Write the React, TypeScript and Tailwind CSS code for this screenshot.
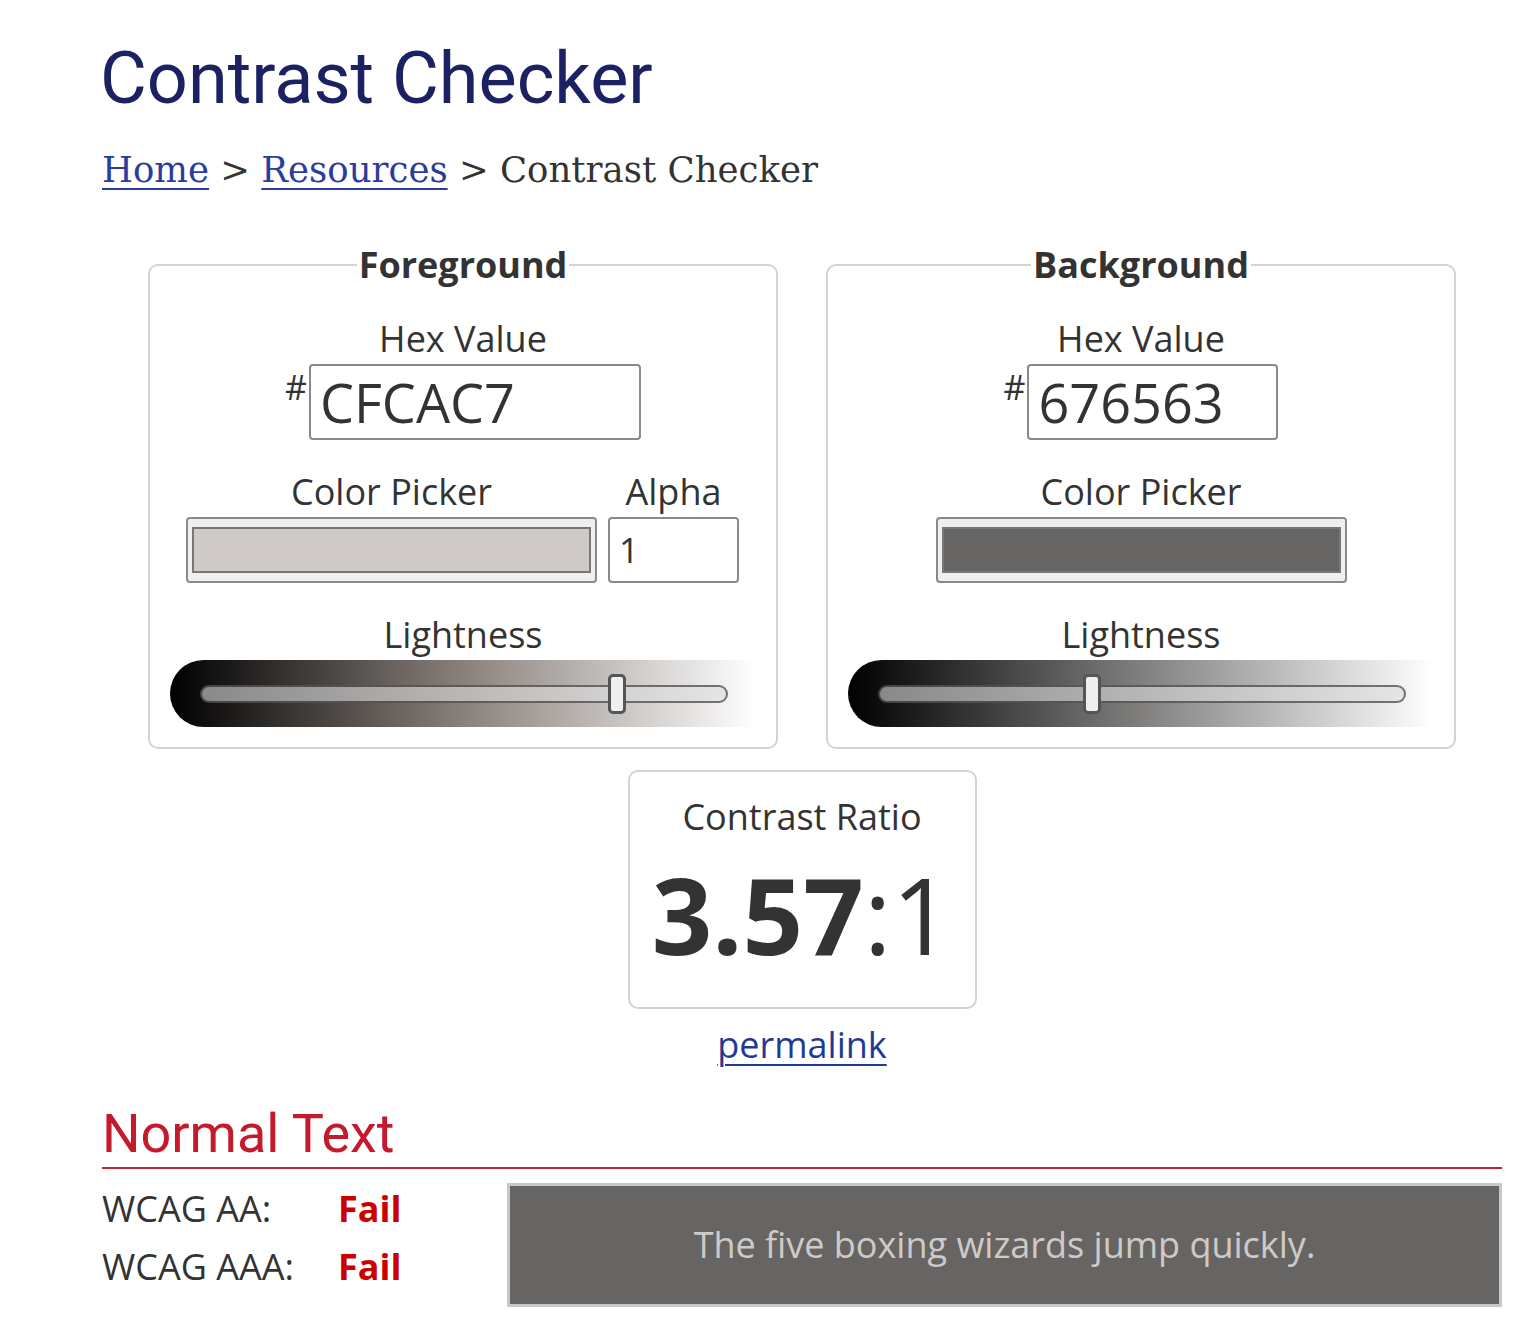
import React from "react";

const sans = "font-['Open_Sans',sans-serif]";

function Slider({ gradient, thumbLeft }: { gradient: string; thumbLeft: string }) {
  return (
    <div className={`w-[585px] h-[67px] rounded-l-full flex items-center pl-[30px] pr-[27px] ${gradient}`}>
      <div className="relative w-full h-[18px] rounded-full bg-[rgba(220,220,220,0.6)] border-2 border-black/50">
        <div className={`absolute top-[-13px] w-[18px] h-[40px] rounded-[5px] bg-[#efefef] border-[3px] border-[#555] ${thumbLeft}`} />
      </div>
    </div>
  );
}

function ColorSwatch({ color }: { color: string }) {
  return (
    <div className="w-[411px] h-[66px] rounded-[4px] border-2 border-[#8a8a8a] bg-[#efefef] px-[4px] py-[8px]">
      <div className={`w-full h-full border-2 border-[#777] ${color}`} />
    </div>
  );
}

export default function App() {
  return (
    <div className={`bg-white w-[1536px] min-h-[1338px] text-[#333] ${sans}`}>
      <div className="w-[1400px] ml-[102px] pt-[36px]">
        <h1 className="font-['Roboto',sans-serif] text-[72px] leading-[86px] text-[#1b2163] ml-[-2px]">
          Contrast Checker
        </h1>
        <div className="font-['DejaVu_Serif',serif] text-[35.5px] leading-[44px] mt-[26px] text-[#333]">
          <a className="text-[#2a3c9c] underline underline-offset-[6px] decoration-2">Home</a>
          <span> &gt; </span>
          <a className="text-[#2a3c9c] underline underline-offset-[6px] decoration-2">Resources</a>
          <span> &gt; Contrast Checker</span>
        </div>

        <div className="flex justify-center gap-[48px] mt-[53px]">
          <fieldset className="w-[630px] h-[504px] border-2 border-[#d3d3d3] rounded-[10px] flex flex-col items-center">
            <legend className="mx-auto px-[2px] text-[36px] font-bold leading-[40px]">Foreground</legend>
            <div className="text-[36px] leading-[44px] mt-[32px]">Hex Value</div>
            <div className="flex items-start mt-[3px]">
              <span className="text-[34px] leading-[34px] mt-[6px] mr-[2px]">#</span>
              <div className="w-[332px] h-[76px] rounded-[4px] border-2 border-[#8a8a8a] pl-[9px] flex items-center text-[54px] leading-none">
                CFCAC7
              </div>
            </div>
            <div className="flex items-end gap-[11px] mt-[30px] ml-[-1px]">
              <div className="flex flex-col items-center">
                <div className="text-[36px] leading-[44px] mb-[3px]">Color Picker</div>
                <ColorSwatch color="bg-[#cfcac7]" />
              </div>
              <div className="flex flex-col items-center">
                <div className="text-[36px] leading-[44px] mb-[3px]">Alpha</div>
                <div className="w-[131px] h-[66px] rounded-[4px] border-2 border-[#8a8a8a] pl-[9px] flex items-center text-[35px]">
                  1
                </div>
              </div>
            </div>
            <div className="text-[36px] leading-[44px] mt-[30px]">Lightness</div>
            <div className="mt-[3px] mr-[2px]">
              <Slider gradient="bg-[linear-gradient(to_right,#000_0%,#89807a_50%,#fff_100%)]" thumbLeft="left-[406px]" />
            </div>
          </fieldset>

          <fieldset className="w-[630px] h-[504px] border-2 border-[#d3d3d3] rounded-[10px] flex flex-col items-center">
            <legend className="mx-auto px-[2px] text-[36px] font-bold leading-[40px]">Background</legend>
            <div className="text-[36px] leading-[44px] mt-[32px]">Hex Value</div>
            <div className="flex items-start mt-[3px]">
              <span className="text-[34px] leading-[34px] mt-[6px] mr-[2px]">#</span>
              <div className="w-[251px] h-[76px] rounded-[4px] border-2 border-[#8a8a8a] pl-[9px] flex items-center text-[54px] leading-none">
                676563
              </div>
            </div>
            <div className="flex flex-col items-center mt-[30px]">
              <div className="text-[36px] leading-[44px] mb-[3px]">Color Picker</div>
              <ColorSwatch color="bg-[#676563]" />
            </div>
            <div className="text-[36px] leading-[44px] mt-[30px]">Lightness</div>
            <div className="mt-[3px] mr-[2px]">
              <Slider gradient="bg-[linear-gradient(to_right,#000_0%,#807f7e_50%,#fff_100%)]" thumbLeft="left-[203px]" />
            </div>
          </fieldset>
        </div>

        <div className="flex flex-col items-center mt-[21px]">
          <div className="w-[349px] h-[239px] border-2 border-[#d3d3d3] rounded-[10px] flex flex-col items-center">
            <div className="text-[36px] leading-[44px] mt-[23px]">Contrast Ratio</div>
            <div className="text-[106px] leading-[100px] mt-[25px]">
              <span className="font-bold">3.57</span>
              <span>:1</span>
            </div>
          </div>
          <a className="text-[36px] leading-[44px] mt-[14px] text-[#1f3a93] underline underline-offset-[6px] decoration-2">
            permalink
          </a>
        </div>

        <div className="mt-[37px]">
          <h2 className="font-['Roboto',sans-serif] text-[54px] leading-[60px] text-[#c41a2b] pb-[3px] border-b-2 border-[#b52a35]">
            Normal Text
          </h2>
          <div className="flex mt-[14px]">
            <div className="w-[405px] mt-[-3px]">
              <div className="flex text-[36px] leading-[58px]">
                <span className="w-[236px]">WCAG AA:</span>
                <span className="font-bold text-[#cc0000]">Fail</span>
              </div>
              <div className="flex text-[36px] leading-[58px]">
                <span className="w-[236px]">WCAG AAA:</span>
                <span className="font-bold text-[#cc0000]">Fail</span>
              </div>
            </div>
            <div className="flex-1 h-[124px] bg-[#676563] border-[3px] border-[#c8c8c8] flex items-center justify-center text-[36px] text-[#cfcac7]">
              The five boxing wizards jump quickly.
            </div>
          </div>
        </div>
      </div>
    </div>
  );
}
